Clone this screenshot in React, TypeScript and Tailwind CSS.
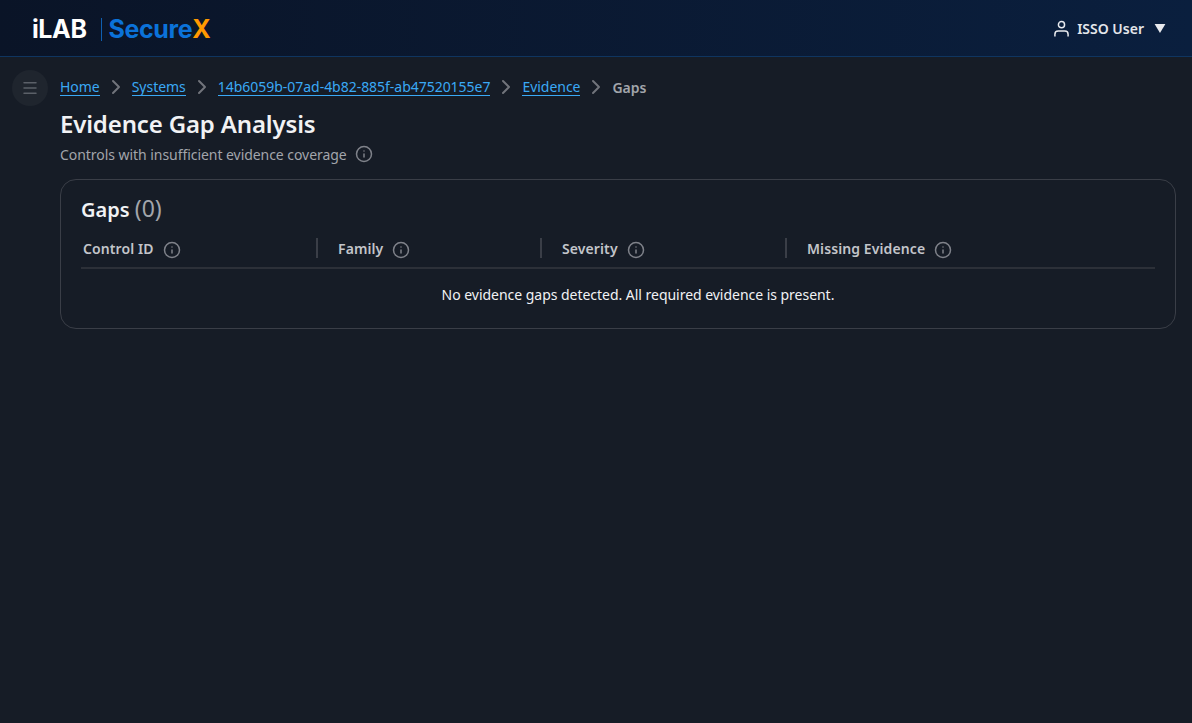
import { ChevronRight, Info, Menu } from 'lucide-react';

const crumbs = ['Home', 'Systems', '14b6059b-07ad-4b82-885f-ab47520155e7', 'Evidence'];

const columns = [
  { label: 'Control ID', width: 'w-[235px]' },
  { label: 'Family', width: 'w-[224px]' },
  { label: 'Severity', width: 'w-[245px]' },
  { label: 'Missing Evidence', width: 'flex-1' },
];

const InfoIcon = ({ className }: { className: string }) => (
  <Info className={`h-[18px] w-[18px] text-[#7f828a] ${className}`} strokeWidth={2} />
);

export default function App() {
  return (
    <div className="relative min-h-[723px] bg-[#161c26] font-['Noto_Sans',sans-serif] text-[#f1f2f4]">
      <header className="flex h-[57px] items-center justify-between border-b border-[#0f3560] bg-gradient-to-r from-[#0a1427] to-[#0a1f3e] pl-[32px] pr-[26px]">
        <div className="mt-[3px] flex items-center font-['Inter',sans-serif] text-[25px] font-bold tracking-[-0.4px]">
          <span className="text-white">iLAB</span>
          <span className="ml-[14px] mr-[7px] h-[23px] w-px bg-[#0f5fb0]" />
          <span className="text-[#0b72d9]">Secure</span>
          <span className="text-[#ff9900]">X</span>
        </div>
        <div className="flex items-center text-[14px] font-semibold text-[#e4e6ea]">
          <svg viewBox="0 0 16 16" className="mr-[7px] h-[17px] w-[17px]" fill="none" stroke="#e8eaee" strokeWidth="1.4">
            <circle cx="8" cy="4.4" r="2.9" />
            <path d="M1.8 15.5v-2.2c0-1.7 1.3-3 3-3h6.4c1.7 0 3 1.3 3 3v2.2" />
          </svg>
          <span>ISSO User</span>
          <svg viewBox="0 0 12 10" className="ml-[10px] h-[9px] w-[12px]" fill="#e8eaee">
            <path d="M0 0h12L6 10z" />
          </svg>
        </div>
      </header>

      {/* sidebar toggle sits over the page, outside the content flow */}
      <button className="absolute left-[12px] top-[70px] flex h-[36px] w-[36px] items-center justify-center rounded-full bg-[#1f252e]">
        <Menu className="h-[18px] w-[18px] text-[#5b6068]" strokeWidth={2} />
      </button>

      <main className="pl-[60px] pr-[16px] pt-[19px]">
        <nav className="flex h-[22px] items-center text-[14px] tracking-[-0.03px]">
          {crumbs.map((crumb) => (
            <div key={crumb} className="flex items-center">
              <a className="border-b border-[#3aa9f5] leading-[17px] text-[#3aa9f5]">{crumb}</a>
              <ChevronRight className="mx-[4px] h-[24px] w-[24px] text-[#71747b]" strokeWidth={2} />
            </div>
          ))}
          <span className="font-semibold text-[#a2a5ab]">Gaps</span>
        </nav>

        <h1 className="mt-[10px] text-[24px] font-semibold leading-[32px] tracking-[-0.15px] text-[#f1f2f4]">Evidence Gap Analysis</h1>
        <p className="mt-[3px] flex h-[22px] items-center text-[14px] tracking-[-0.05px] text-[#a2a5ab]">
          Controls with insufficient evidence coverage
          <InfoIcon className="ml-[8px]" />
        </p>

        <section className="mt-[14px] h-[150px] rounded-[16px] border border-[#3a3e47] px-[20px] pt-[12px]">
          <h2 className="text-[20px] font-semibold leading-[32px] text-[#f1f2f4]">
            Gaps <span className="text-[23px] font-normal text-[#a2a5ab]">(0)</span>
          </h2>
          <div className="mt-[4px] flex h-[39px] items-center border-b-2 border-[#2c3038] pb-[1px]">
            {columns.map((col, i) => (
              <div key={col.label} className={`flex h-[20px] items-center ${col.width}`}>
                {i > 0 && <span className="mr-[20px] h-[20px] w-[2px] bg-[#3a3e47]" />}
                <span className={`text-[14px] font-semibold tracking-[0.1px] text-[#c3c5ca] ${i === 0 ? 'ml-[2px]' : ''}`}>{col.label}</span>
                <InfoIcon className="ml-[9px] mt-[3px]" />
              </div>
            ))}
          </div>
          <p className="mt-[15px] pl-[40px] text-center text-[14px] leading-[22px] tracking-[-0.03px] text-[#f1f2f4]">
            No evidence gaps detected. All required evidence is present.
          </p>
        </section>
      </main>
    </div>
  );
}
